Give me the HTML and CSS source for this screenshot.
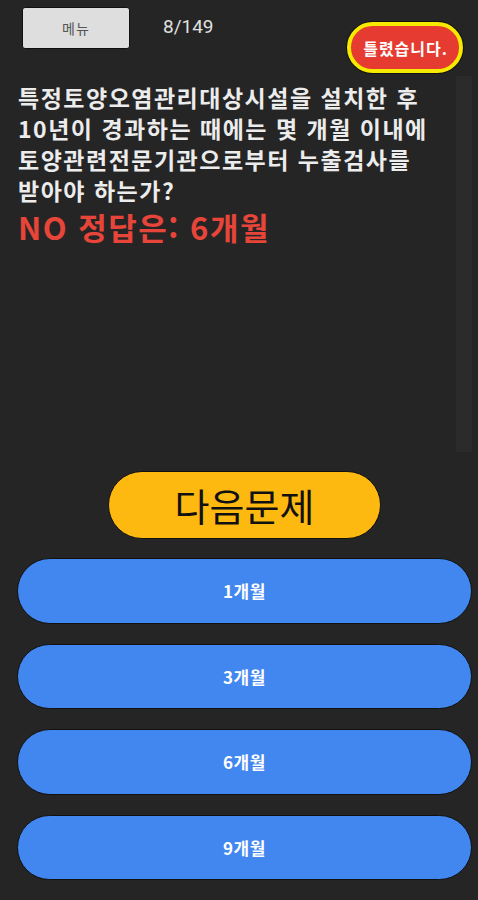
FILE: index.html
```html
<!DOCTYPE html>
<html lang="ko">
  <head>
    <meta charset="UTF-8" />
    <meta name="viewport" content="width=device-width, initial-scale=1.0" />
    <title>문제풀이</title>
    <link rel="stylesheet" href="styles.css">
  </head>
  <body>
    <div class="screen">
      <div class="top">
        <button class="menu">메뉴</button>
        <div class="count">8/149</div>
        <div class="badge">틀렸습니다.</div>
      </div>

      <div class="question-box">
        <div class="question">특정토양오염관리대상시설을 설치한 후 10년이 경과하는 때에는 몇 개월 이내에 토양관련전문기관으로부터 누출검사를 받아야 하는가?</div>
        <div class="result">NO 정답은: 6개월</div>
        <div class="scrollbar"></div>
      </div>

      <div class="next-row">
        <button class="next">다음문제</button>
      </div>

      <div class="choices">
        <button class="choice">1개월</button>
        <button class="choice">3개월</button>
        <button class="choice">6개월</button>
        <button class="choice">9개월</button>
      </div>
    </div>
  </body>
</html>
```

FILE: styles.css
```css
body {
  margin: 0;
  background-color: #252525;
  font-family: "Noto Sans CJK KR", "Noto Sans", sans-serif;
  color: #e8e8e8;
}
.screen {
  width: 478px;
  height: 900px;
  position: relative;
}
button {
  font-family: inherit;
  border: none;
  cursor: pointer;
}
.top {
  display: flex;
  align-items: flex-start;
  height: 76px;
  padding-left: 22px;
  box-sizing: border-box;
}
.menu {
  margin-top: 7px;
  width: 108px;
  height: 42px;
  background-color: #dedede;
  border: 1px solid #111;
  border-radius: 3px;
  color: #555;
  font-size: 14px;
  letter-spacing: 1px;
}
.count {
  margin-top: 15px;
  margin-left: 33px;
  font-family: Roboto, "Noto Sans", sans-serif;
  font-size: 19px;
  color: #e0e0e0;
}
.badge {
  margin-top: 22px;
  margin-left: auto;
  margin-right: 15px;
  height: 43px;
  padding: 0 11px 0 12px;
  display: flex;
  align-items: center;
  background-color: #e53b30;
  border: 4px solid #f5ea00;
  box-shadow: 0 0 0 1px #111;
  border-radius: 26px;
  color: #fff;
  font-weight: bold;
  font-size: 16px;
  letter-spacing: 1px;
}
.question-box {
  position: relative;
  height: 389px;
  padding: 6px 30px 0 18px;
}
.question {
  font-size: 23px;
  font-weight: bold;
  line-height: 31px;
  letter-spacing: 1.5px;
  word-break: keep-all;
  color: #ececec;
}
.result {
  margin-top: 2px;
  font-size: 31px;
  font-weight: bold;
  line-height: 38px;
  letter-spacing: 1.5px;
  color: #e8453a;
}
.scrollbar {
  position: absolute;
  right: 6px;
  top: 0;
  width: 16px;
  height: 376px;
  background-color: #2b2b2b;
}
.next-row {
  display: flex;
  padding-left: 108px;
}
.next {
  width: 273px;
  height: 68px;
  border-radius: 34px;
  background-color: #fdb90f;
  border: 1px solid #111;
  color: #111;
  font-size: 38px;
  line-height: 1;
}
.choices {
  display: flex;
  flex-direction: column;
  gap: 20px;
  padding: 19px 6px 0 17px;
}
.choice {
  height: 65.5px;
  border-radius: 33px;
  background-color: #4287ef;
  border: 1px solid #111;
  color: #fff;
  font-size: 17px;
  font-weight: bold;
  letter-spacing: 0.5px;
}
```
